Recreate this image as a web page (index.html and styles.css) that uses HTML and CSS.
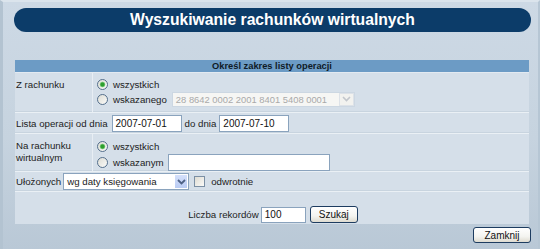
FILE: index.html
```html
<!DOCTYPE html>
<html lang="pl">
<head>
<meta charset="utf-8">
<title>Wyszukiwanie rachunków wirtualnych</title>
<link rel="stylesheet" href="styles.css">
</head>
<body>
<div class="frame">
  <div class="title">Wyszukiwanie rachunków wirtualnych</div>
  <div class="panel">
    <div class="head">Określ zakres listy operacji</div>

    <div class="row split r1">
      <div class="lbl">Z rachunku</div>
      <div class="opts">
        <label class="opt o1"><input type="radio" name="acc" checked>wszystkich</label>
        <label class="opt o2"><input type="radio" name="acc">wskazanego
          <span class="sel dis acc-sel"><span class="sel-text">28 8642 0002 2001 8401 5408 0001</span><span class="arrow"><svg width="9" height="6" viewBox="0 0 9 6"><path d="M1 1 L4.5 4.5 L8 1" fill="none" stroke="currentColor" stroke-width="1.6"/></svg></span></span>
        </label>
      </div>
    </div>

    <div class="row r2">
      <span class="txt">Lista operacji od dnia</span>
      <span class="inp date">2007-07-01</span>
      <span class="txt">do dnia</span>
      <span class="inp date">2007-07-10</span>
    </div>

    <div class="row split r3">
      <div class="lbl two">Na rachunku<br>wirtualnym</div>
      <div class="opts">
        <label class="opt o1"><input type="radio" name="virt" checked>wszystkich</label>
        <label class="opt o2b"><input type="radio" name="virt">wskazanym <span class="inp virt"></span></label>
      </div>
    </div>

    <div class="row r4">
      <span class="txt">Ułożonych</span>
      <span class="sel sort-sel"><span class="sel-text">wg daty księgowania</span><span class="arrow"><svg width="9" height="6" viewBox="0 0 9 6"><path d="M1 1 L4.5 4.5 L8 1" fill="none" stroke="currentColor" stroke-width="1.8"/></svg></span></span>
      <label class="chk"><input type="checkbox">odwrotnie</label>
    </div>

    <div class="row r5">
      <span class="txt">Liczba rekordów</span>
      <span class="inp num">100</span>
      <button class="btn search">Szukaj</button>
    </div>
  </div>
  <div class="foot">
    <button class="btn close">Zamknij</button>
  </div>
</div>
</body>
</html>
```

FILE: styles.css
```css
html, body {
  margin: 0;
  padding: 0;
}
body {
  width: 540px;
  height: 249px;
  overflow: hidden;
  font-family: "Liberation Sans", Arial, sans-serif;
  font-size: 9.7px;
  color: #222;
}
.frame {
  box-sizing: border-box;
  width: 540px;
  height: 249px;
  border-left: 3px solid #b3c3d1;
  border-right: 2px solid #b6c6d4;
  border-top: 2px solid #dbe4ec;
  background: linear-gradient(#cdd9e5, #c6d3df 55%, #b9c8d6);
  padding: 6px 7px 0 11px;
}
.title {
  height: 24px;
  border-radius: 12px;
  background: #0c3c69;
  color: #fff;
  font-weight: bold;
  font-size: 15.7px;
  line-height: 24px;
  text-align: center;
}
.panel {
  margin: 28px 2px 0 1px;
  background: #d5dfe9;
}
.head {
  box-sizing: border-box;
  height: 13px;
  background: #6c9bc5;
  border-bottom: 1px solid #e3eaf1;
  font-weight: bold;
  font-size: 9.3px;
  line-height: 12px;
  text-align: center;
  color: #0f1a26;
}
.row {
  box-sizing: border-box;
  border-bottom: 1px solid #eaf0f5;
  box-shadow: inset 0 -1px 0 #c8d4df;
  display: flex;
  align-items: center;
  padding-left: 1px;
}
.row.split {
  align-items: stretch;
  padding-left: 0;
}
.lbl {
  box-sizing: border-box;
  width: 78px;
  flex: none;
  border-right: 1px solid #e8eef4;
  padding: 6px 0 0 1px;
  line-height: 12px;
}
.lbl.two {
  line-height: 12.3px;
}
.opts {
  display: flex;
  flex-direction: column;
  padding-left: 4px;
}
.opt {
  display: flex;
  align-items: center;
}
.r1 { height: 40px; }
.r1 .opts { padding-top: 4px; }
.r1 .o1 { height: 14px; }
.r1 .o2 { height: 16px; }
.r2 { height: 21px; }
.r3 { height: 38px; }
.r3 .opts { padding-top: 6px; }
.r3 .o1 { height: 13px; }
.r3 .o2b { height: 18px; }
.r4 { height: 20px; }
.r5 {
  height: 32px;
  border-bottom: none;
  box-shadow: none;
  justify-content: center;
  padding: 13px 0 0 2px;
}

input[type=radio] {
  appearance: none;
  -webkit-appearance: none;
  box-sizing: border-box;
  width: 11px;
  height: 11px;
  margin: 0 5px 0 0;
  border: 1px solid #55708c;
  border-radius: 50%;
  background: linear-gradient(135deg, #dcdcd4, #fbfbf9);
}
input[type=radio]:checked {
  background: radial-gradient(circle, #2f9e2f 0 1.6px, #7ccb7c 2.4px, rgba(255,255,255,0) 3.2px), linear-gradient(135deg, #dcdcd4, #fbfbf9);
}
input[type=checkbox] {
  appearance: none;
  -webkit-appearance: none;
  box-sizing: border-box;
  width: 11px;
  height: 11px;
  margin: 0 6px 0 0;
  border: 1px solid #7b8fa4;
  background: linear-gradient(135deg, #dedcd3, #fafaf8);
}
.chk {
  display: flex;
  align-items: center;
  margin-left: 5px;
}

.inp {
  box-sizing: border-box;
  display: inline-flex;
  align-items: center;
  height: 17px;
  background: #fff;
  border: 1px solid #8aa3bd;
  padding-left: 3px;
  font-size: 10px;
  color: #111;
}
.date { width: 70px; }
.r2 .txt:first-child { margin-right: 4px; }
.r2 .date + .txt { margin: 0 3px 0 3px; }
.virt { width: 162px; margin-left: 4px; }
.num { width: 45px; height: 16px; margin: 0 4px 0 2px; }

.sel {
  box-sizing: border-box;
  display: inline-flex;
  align-items: stretch;
  height: 15px;
  border: 1px solid #8aa3bd;
  background: #fff;
}
.sel-text {
  flex: 1;
  padding-left: 3px;
  display: flex;
  align-items: center;
  white-space: nowrap;
  overflow: hidden;
}
.arrow {
  width: 13px;
  flex: none;
  display: flex;
  align-items: center;
  justify-content: center;
  background: linear-gradient(#d4e0fb, #b9cbf3);
  color: #4d6185;
  border-left: 1px solid #fff;
}
.acc-sel {
  width: 183px;
  margin-left: 5px;
  border-color: #ccd7e2;
  background: #f6f6f4;
  color: #a9a9a9;
  font-size: 9.4px;
}
.acc-sel .arrow {
  background: #f2f2ef;
  color: #c2c6cc;
  border: 1px solid #dde2e8;
}
.sort-sel {
  width: 126px;
  height: 17px;
  margin-left: 2px;
}
.sort-sel .arrow {
  margin: 1px;
  width: 12px;
}

.btn {
  box-sizing: border-box;
  font-family: "Liberation Sans", Arial, sans-serif;
  font-size: 10px;
  color: #111;
  height: 17px;
  padding: 0;
  border: 1px solid #1d3c60;
  border-radius: 3px;
  background: linear-gradient(#ffffff, #f4f4f0 60%, #dedbd0);
}
.search { width: 48px; }
.foot {
  display: flex;
  justify-content: flex-end;
  margin-top: 3px;
}
.close { width: 58px; height: 16px; }
```
